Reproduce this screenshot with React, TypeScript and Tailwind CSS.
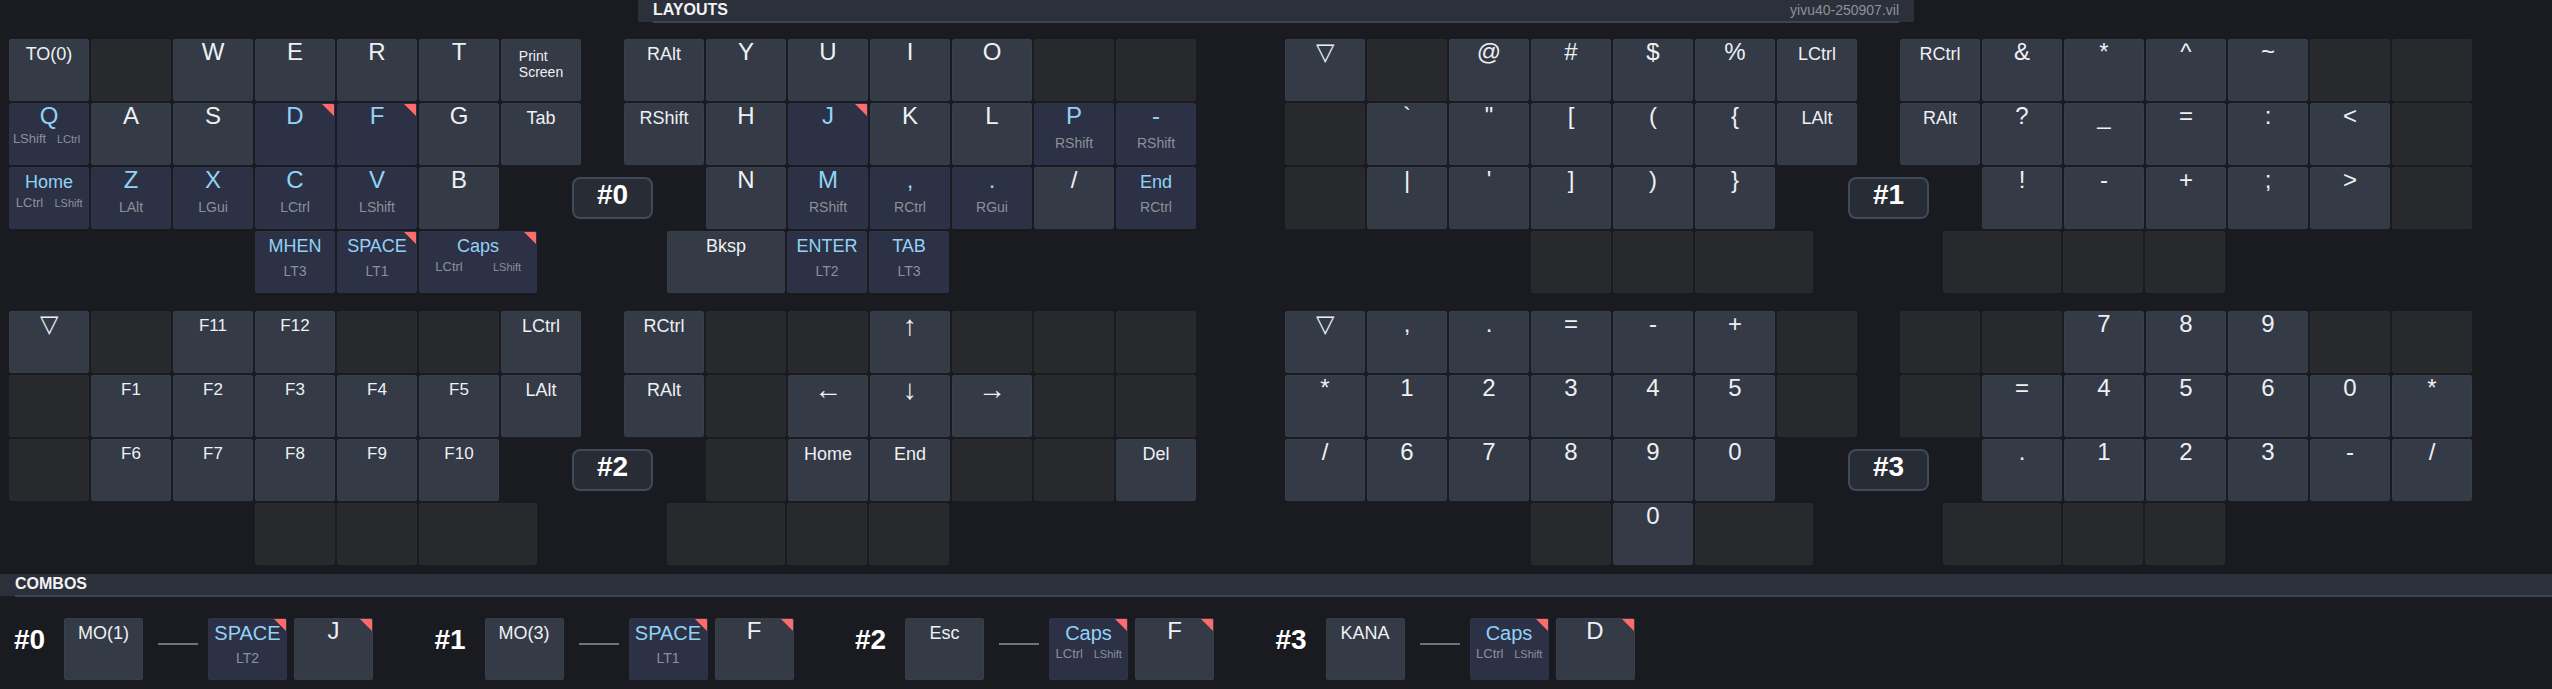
import React from "react";

type K = { l?: string; s?: string; s2?: string; m?: boolean; t?: boolean; w?: boolean; big?: boolean };
type Cell = string | K;

const n = (c: Cell): K => (typeof c === "string" ? (c === "" ? {} : { l: c }) : c);

function labelClass(l: string, big?: boolean) {
  if (big) return "text-[20px] leading-[18px] pt-[6px]";
  if (/^[←↑↓→]$/.test(l)) return "text-[28px] leading-[24px] pt-[3px]";
  if (l.length === 1) return "text-[24px] leading-[24px] pt-[1px]";
  if (/^F\d+$/.test(l)) return "text-[17px] leading-[16px] pt-[7px]";
  return "text-[18px] leading-[18px] pt-[6px]";
}

function Key({ cell, combo }: { cell: Cell; combo?: boolean }) {
  const k = n(cell);
  const width = combo ? "w-[79px]" : k.w ? "w-[118px]" : "w-[80px]";
  const empty = !k.l;
  const bg = empty
    ? "bg-[#27292d] border-[#292b2f]"
    : k.m
      ? "bg-[#2c3145] border-[#2e3348]"
      : "bg-[#343a46] border-[#373d49]";
  const top = k.s2 ? "h-[29px]" : "h-[32px]";
  return (
    <div className={`relative ${width} h-[62px] shrink-0 rounded-[2px] border flex flex-col overflow-hidden ${bg}`}>
      {k.l === "Print Screen" ? (
        <div className="mx-auto pt-[8px] text-[14px] leading-[16px] text-[#eef0f3]">
          Print
          <br />
          Screen
        </div>
      ) : (
        <>
          <div className={`${top} -mt-[1px] text-center whitespace-nowrap ${k.l ? labelClass(k.l, k.big) : ""} ${k.m ? "text-[#92d2f6]" : "text-[#eef0f3]"}`}>
            {k.l}
          </div>
          {k.s && !k.s2 && <div className="text-center text-[14px] leading-[16px] text-[#8b909b]">{k.s}</div>}
          {k.s2 && (
            <div className="grid grid-cols-2 items-center h-[14px] text-center leading-[14px] text-[#8b909b]">
              <span className="text-[13px]">{k.s}</span>
              <span className="text-[11px]">{k.s2}</span>
            </div>
          )}
        </>
      )}
      {k.t && (
        <span className="absolute top-0 right-0 w-0 h-0 border-t-[12px] border-t-[#ff6b6b] border-l-[12px] border-l-transparent" />
      )}
    </div>
  );
}

function Row({ cells, offset }: { cells: Cell[]; offset?: string }) {
  return (
    <div className={`flex gap-[2px] h-[62px] ${offset ?? ""}`}>
      {cells.map((c, i) => (
        <Key key={i} cell={c} />
      ))}
    </div>
  );
}

type Layer = {
  id: string;
  left: Cell[][];
  right: Cell[][];
};

const W: K = { w: true };

const layers: Layer[] = [
  {
    id: "#0",
    left: [
      ["TO(0)", "", "W", "E", "R", "T", "Print Screen"],
      [
        { l: "Q", s: "LShift", s2: "LCtrl", m: true },
        "A",
        "S",
        { l: "D", m: true, t: true },
        { l: "F", m: true, t: true },
        "G",
        "Tab",
      ],
      [
        { l: "Home", s: "LCtrl", s2: "LShift", m: true },
        { l: "Z", s: "LAlt", m: true },
        { l: "X", s: "LGui", m: true },
        { l: "C", s: "LCtrl", m: true },
        { l: "V", s: "LShift", m: true },
        "B",
      ],
      [
        { l: "MHEN", s: "LT3", m: true },
        { l: "SPACE", s: "LT1", m: true, t: true },
        { l: "Caps", s: "LCtrl", s2: "LShift", m: true, t: true, w: true },
      ],
    ],
    right: [
      ["RAlt", "Y", "U", "I", "O", "", ""],
      [
        "RShift",
        "H",
        { l: "J", m: true, t: true },
        "K",
        "L",
        { l: "P", s: "RShift", m: true },
        { l: "-", s: "RShift", m: true },
      ],
      [
        "N",
        { l: "M", s: "RShift", m: true },
        { l: ",", s: "RCtrl", m: true },
        { l: ".", s: "RGui", m: true },
        "/",
        { l: "End", s: "RCtrl", m: true },
      ],
      [{ l: "Bksp", w: true }, { l: "ENTER", s: "LT2", m: true }, { l: "TAB", s: "LT3", m: true }],
    ],
  },
  {
    id: "#1",
    left: [
      ["▽", "", "@", "#", "$", "%", "LCtrl"],
      ["", "`", '"', "[", "(", "{", "LAlt"],
      ["", "|", "'", "]", ")", "}"],
      ["", "", W],
    ],
    right: [
      ["RCtrl", "&", "*", "^", "~", "", ""],
      ["RAlt", "?", "_", "=", ":", "<", ""],
      ["!", "-", "+", ";", ">", ""],
      [W, "", ""],
    ],
  },
  {
    id: "#2",
    left: [
      ["▽", "", "F11", "F12", "", "", "LCtrl"],
      ["", "F1", "F2", "F3", "F4", "F5", "LAlt"],
      ["", "F6", "F7", "F8", "F9", "F10"],
      ["", "", W],
    ],
    right: [
      ["RCtrl", "", "", "↑", "", "", ""],
      ["RAlt", "", "←", "↓", "→", "", ""],
      ["", "Home", "End", "", "", "Del"],
      [W, "", ""],
    ],
  },
  {
    id: "#3",
    left: [
      ["▽", ",", ".", "=", "-", "+", ""],
      ["*", "1", "2", "3", "4", "5", ""],
      ["/", "6", "7", "8", "9", "0"],
      ["", "0", W],
    ],
    right: [
      ["", "", "7", "8", "9", "", ""],
      ["", "=", "4", "5", "6", "0", "*"],
      [".", "1", "2", "3", "-", "/"],
      [W, "", ""],
    ],
  },
];

function LayerBlock({ layer }: { layer: Layer }) {
  return (
    <div className="relative flex gap-[43px] w-[1276px]">
      <div className="flex flex-col gap-[2px] w-[572px]">
        <Row cells={layer.left[0]} />
        <Row cells={layer.left[1]} />
        <Row cells={layer.left[2]} />
        <Row cells={layer.left[3]} offset="ml-[246px]" />
      </div>
      <div className="flex flex-col gap-[2px] w-[572px]">
        <Row cells={layer.right[0]} />
        <Row cells={layer.right[1]} />
        <Row cells={layer.right[2]} offset="ml-[82px]" />
        <Row cells={layer.right[3]} offset="ml-[43px]" />
      </div>
      <div className="absolute left-[563px] top-[138px] w-[81px] h-[42px] rounded-[8px] border-2 border-[#3f4a5a] bg-[#282c35] text-center text-[28px] leading-[32px] font-bold text-white">
        {layer.id}
      </div>
    </div>
  );
}

const combos: { id: string; a: Cell; b: Cell; c: Cell }[] = [
  { id: "#0", a: "MO(1)", b: { l: "SPACE", s: "LT2", m: true, t: true, big: true }, c: { l: "J", t: true } },
  { id: "#1", a: "MO(3)", b: { l: "SPACE", s: "LT1", m: true, t: true, big: true }, c: { l: "F", t: true } },
  { id: "#2", a: "Esc", b: { l: "Caps", s: "LCtrl", s2: "LShift", m: true, t: true, big: true }, c: { l: "F", t: true } },
  { id: "#3", a: "KANA", b: { l: "Caps", s: "LCtrl", s2: "LShift", m: true, t: true, big: true }, c: { l: "D", t: true } },
];

export default function App() {
  return (
    <div className="w-[2552px] h-[689px] overflow-hidden bg-[#1a1b20] [font-family:'Liberation_Sans',Arial,sans-serif]">
      <div className="ml-[638px] w-[1276px] h-[22px] bg-[#2c303a] px-[15px]">
        <div className="flex items-center justify-between h-[23px] border-b-2 border-[#3d4452] pb-[2px]">
          <span className="text-[16px] font-bold text-[#f2f3f5]">LAYOUTS</span>
          <span className="pt-[2px] text-[14px] text-[#8b909b]">yivu40-250907.vil</span>
        </div>
      </div>

      <div className="grid grid-cols-[1276px_1276px] gap-y-[18px] pl-[9px] pt-[17px]">
        {layers.map((l) => (
          <LayerBlock key={l.id} layer={l} />
        ))}
      </div>

      <div className="mt-[9px] h-[22px] bg-[#2c303a] pl-[15px]">
        <div className="flex items-center h-[23px] border-b-2 border-[#3d4452] pb-[2px]">
          <span className="text-[16px] font-bold text-[#f2f3f5]">COMBOS</span>
        </div>
      </div>

      <div className="flex pl-[14px] pt-[22px]">
        {combos.map((c) => (
          <div key={c.id} className="flex items-start w-[420.5px] shrink-0">
            <div className="w-[50px] pt-[6px] text-[28px] leading-[32px] font-bold text-white">{c.id}</div>
            <Key cell={c.a} combo />
            <div className="w-[40px] h-[2px] ml-[15px] mt-[25px] bg-[#6f737c]" />
            <div className="ml-[10px] flex gap-[7px]">
              <Key cell={c.b} combo />
              <Key cell={c.c} combo />
            </div>
          </div>
        ))}
      </div>
    </div>
  );
}
